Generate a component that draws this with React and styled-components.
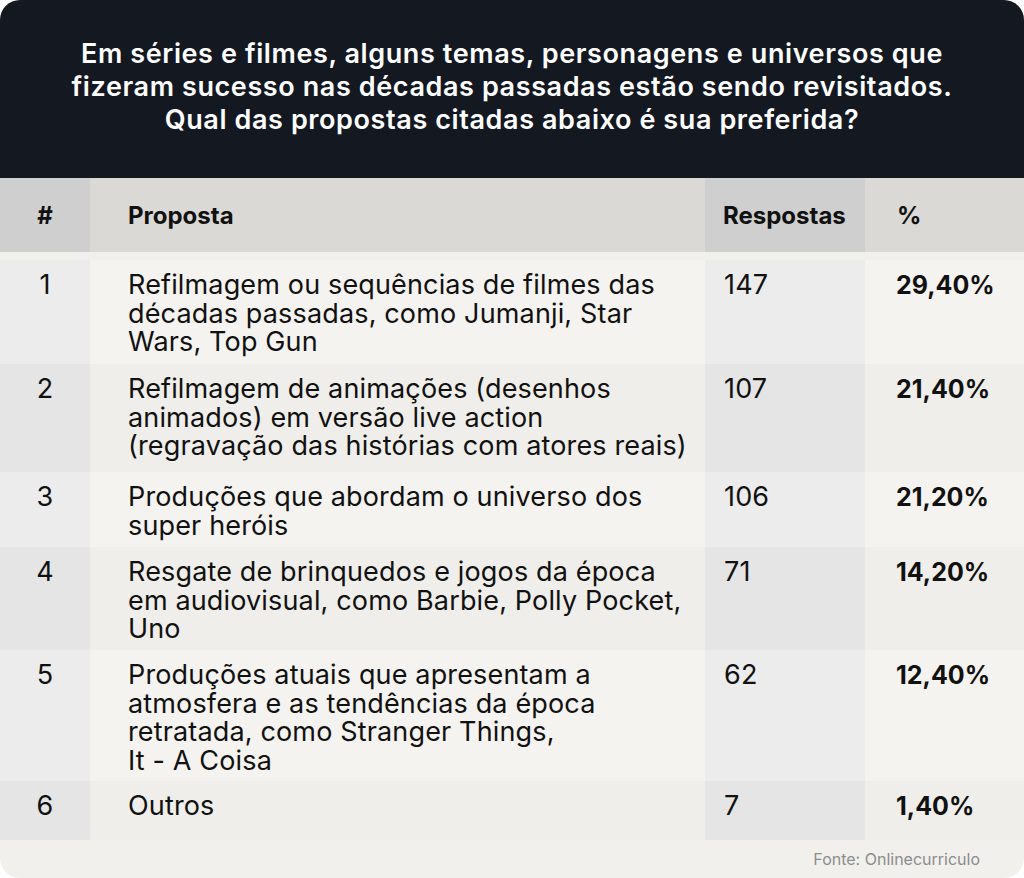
import React from 'react';
import styled, { createGlobalStyle } from 'styled-components';

const rows = [
  { n: 1, text: 'Refilmagem ou sequências de filmes das\ndécadas passadas, como Jumanji, Star\nWars, Top Gun', count: 147, pct: '29,40%', h: 104 },
  { n: 2, text: 'Refilmagem de animações (desenhos\nanimados) em versão live action\n(regravação das histórias com atores reais)', count: 107, pct: '21,40%', h: 108 },
  { n: 3, text: 'Produções que abordam o universo dos\nsuper heróis', count: 106, pct: '21,20%', h: 75 },
  { n: 4, text: 'Resgate de brinquedos e jogos da época\nem audiovisual, como Barbie, Polly Pocket,\nUno', count: 71, pct: '14,20%', h: 103 },
  { n: 5, text: 'Produções atuais que apresentam a\natmosfera e as tendências da época\nretratada, como Stranger Things,\nIt - A Coisa', count: 62, pct: '12,40%', h: 131 },
  { n: 6, text: 'Outros', count: 7, pct: '1,40%', h: 59 },
];

const Global = createGlobalStyle`
  html, body { margin: 0; padding: 0; background: #ffffff; }
  body { font-family: Inter, "Liberation Sans", sans-serif; }
`;

const App = () => {
  return (
    <>
      <Global />
      <Card>
        <Title>
          Em séries e filmes, alguns temas, personagens e universos que<br />
          fizeram sucesso nas décadas passadas estão sendo revisitados.<br />
          Qual das propostas citadas abaixo é sua preferida?
        </Title>
        <HeadRow>
          <HeadCell $alt $center>#</HeadCell>
          <HeadCell>Proposta</HeadCell>
          <HeadCell $alt>Respostas</HeadCell>
          <HeadCell>%</HeadCell>
        </HeadRow>
        <Body>
          {rows.map((r, i) => (
            <Row key={r.n} style={{ height: r.h }}>
              <Cell $alt $dark={i % 2 === 1} $center>{r.n}</Cell>
              <Cell $dark={i % 2 === 1}>{r.text}</Cell>
              <Cell $alt $dark={i % 2 === 1}>{r.count}</Cell>
              <Pct $dark={i % 2 === 1}>{r.pct}</Pct>
            </Row>
          ))}
        </Body>
        <Footer>Fonte: Onlinecurriculo</Footer>
      </Card>
    </>
  );
};

const Card = styled.div`
  width: 1024px;
  height: 878px;
  border-radius: 20px;
  overflow: hidden;
  background: #f1f0ec;
  display: flex;
  flex-direction: column;
`;

const Title = styled.h1`
  margin: 0;
  height: 178px;
  box-sizing: border-box;
  padding-top: 37px;
  background: #131821;
  color: #ffffff;
  font-size: 27px;
  line-height: 33px;
  font-weight: 600;
  letter-spacing: 0.6px;
  text-align: center;
`;

const HeadRow = styled.div`
  display: grid;
  grid-template-columns: 90px 615px 160px 1fr;
  height: 74px;
`;

const HeadCell = styled.div`
  background: ${(p) => (p.$alt ? '#cfcfcf' : '#dad9d5')};
  display: flex;
  align-items: center;
  justify-content: ${(p) => (p.$center ? 'center' : 'flex-start')};
  padding-left: ${(p) => (p.$center ? '0' : '38px')};
  font-size: 24px;
  font-weight: 700;
  color: #111111;
  &:nth-child(3) { padding-left: 18px; }
  &:nth-child(4) { padding-left: 32px; }
`;

const Body = styled.div`
  margin-top: 8px;
  display: flex;
  flex-direction: column;
`;

const Row = styled.div`
  display: grid;
  grid-template-columns: 90px 615px 160px 1fr;
`;

const Cell = styled.div`
  background: ${(p) =>
    p.$alt ? (p.$dark ? '#e5e5e5' : '#ececed') : p.$dark ? '#efeeea' : '#f4f3f0'};
  box-sizing: border-box;
  padding-top: 11px;
  padding-left: ${(p) => (p.$center ? '0' : '38px')};
  text-align: ${(p) => (p.$center ? 'center' : 'left')};
  white-space: pre-line;
  font-size: 27px;
  line-height: 28.5px;
  letter-spacing: 0.15px;
  font-weight: 400;
  color: #111111;
  &:nth-child(3) { padding-left: 19px; }
`;

const Pct = styled(Cell)`
  padding-left: 31px;
  font-size: 25px;
  letter-spacing: 0;
  font-weight: 700;
`;

const Footer = styled.div`
  flex: 1;
  display: flex;
  align-items: center;
  justify-content: flex-end;
  padding-right: 44px;
  font-size: 16px;
  color: #8c8c8c;
`;

export default App;
